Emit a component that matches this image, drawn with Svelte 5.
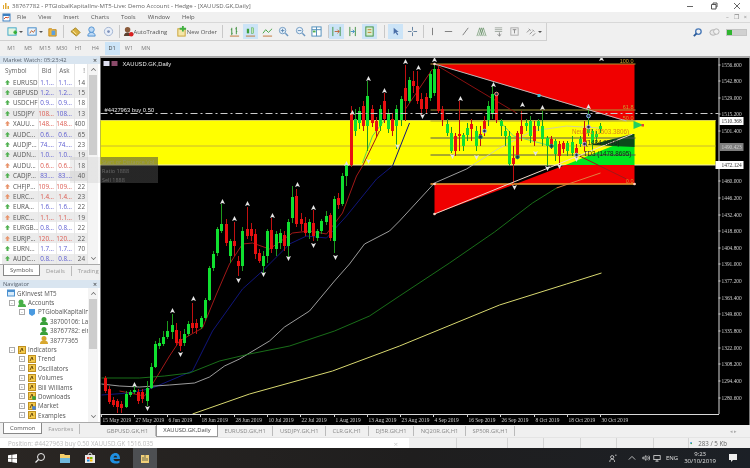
<script>
  const rows = [
    ['EURUSD', '1.1...', '1.1...', 14, 'b'], ['GBPUSD', '1.2...', '1.2...', 15, 'b'],
    ['USDCHF', '0.9...', '0.9...', 18, 'b'], ['USDJPY', '108...', '108...', 13, 'm'],
    ['XAUU...', '148...', '148...', 400, 'r'], ['AUDC...', '0.6...', '0.6...', 65, 'b'],
    ['AUDJP...', '74....', '74....', 23, 'b'], ['AUDN...', '1.0...', '1.0...', 19, 'b'],
    ['AUDU...', '0.6...', '0.6...', 18, 'r'], ['CADJP...', '83....', '83....', 40, 'b'],
    ['CHFJP...', '109...', '109...', 22, 'r'], ['EURC...', '1.4...', '1.4...', 23, 'r'],
    ['EURA...', '1.6...', '1.6...', 22, 'b'], ['EURC...', '1.1...', '1.1...', 19, 'r'],
    ['EURGB...', '0.8...', '0.8...', 22, 'b'], ['EURJP...', '120...', '120...', 22, 'r'],
    ['EURN...', '1.7...', '1.7...', 70, 'b'], ['AUDC...', '0.8...', '0.8...', 24, 'b']
  ];

  const indicators = ['Trend', 'Oscillators', 'Volumes', 'Bill Williams', 'Downloads', 'Market', 'Examples'];
  const timeframes = ['M1', 'M5', 'M15', 'M30', 'H1', 'H4', 'D1', 'W1', 'MN'];
  const tabs = ['GBPUSD.GK,H1', 'XAUUSD.GK,Daily', 'EURUSD.GK,H1', 'USDJPY.GK,H1', 'CLR.GK,H1', 'DJ5R.GK,H1', 'NQ20R.GK,H1', 'SP50R.GK,H1'];
  const menu = ['File', 'View', 'Insert', 'Charts', 'Tools', 'Window', 'Help'];

  // x, green?, body top, body bottom, high, low (screen px)
  const candles = [
    [106,0,377,390,375,392],[110,0,388,401,385,403],[114,0,399,404,396,406],[118,0,400,406,398,412],[122,0,403,407,400,412],
    [127,1,393,406,390,407],[131,1,391,394,389,396],[135,1,389,391,385,393],[139,0,391,400,388,403],[143,0,391,398,388,402],
    [148,1,387,400,380,405],[152,1,366,387,362,388],[156,1,343,366,340,367],[160,1,342,345,337,348],[164,1,336,343,330,345],
    [168,1,330,336,320,338],[173,1,324,331,313,338],[177,0,329,342,322,345],[181,0,338,345,330,350],[185,1,333,342,328,345],
    [189,1,323,333,320,335],[193,0,322,327,302,332],[197,0,322,327,318,333],[202,1,317,326,315,328],[206,1,299,317,297,320],
    [210,1,267,299,265,300],[214,1,253,267,250,270],[218,1,228,252,226,255],[222,1,223,230,203,232],[227,0,223,242,218,245],
    [231,1,240,255,238,262],[235,0,240,245,221,255],[239,0,260,265,255,275],[243,1,230,265,226,270],[248,0,228,235,206,238],
    [252,0,228,235,222,240],[256,0,233,253,228,258],[260,0,252,260,248,262],[264,1,255,265,250,272],[268,1,230,255,228,262],
    [272,0,229,248,217,252],[277,1,233,248,230,255],[281,1,232,242,228,248],[285,0,234,245,230,250],[289,1,221,245,218,256],
    [293,1,196,217,185,222],[297,0,195,223,188,226],[302,0,218,223,212,230],[306,0,222,232,216,235],[310,1,221,232,218,238],
    [314,0,222,235,209,240],[318,1,230,237,228,240],[322,1,220,230,218,233],[327,1,215,221,210,224],[331,0,214,237,212,240],
    [335,1,198,240,195,252],[339,0,197,204,192,208],[343,1,175,203,172,205],[347,1,164,175,162,185],[352,0,112,164,105,166],
    [356,1,118,130,108,135],[360,1,110,122,106,128],[364,0,105,125,100,130],[368,1,95,125,80,150],[373,0,108,122,104,126],
    [377,0,120,130,116,136],[381,1,108,125,104,130],[385,0,100,118,92,122],[389,1,112,128,108,132],[393,0,118,130,112,135],
    [397,1,108,125,104,148],[402,1,98,119,95,125],[406,0,87,100,64,120],[410,1,79,100,76,102],[414,0,80,85,70,92],
    [418,0,85,100,70,103],[422,0,98,108,92,115],[427,0,96,108,92,112],[431,1,73,97,70,100],[435,1,68,92,62,95],
    [439,0,68,110,65,112],[443,0,108,119,105,125],[448,1,123,132,118,135],[452,1,132,150,126,152],[456,0,135,150,132,155],
    [460,0,133,135,100,150],[464,1,134,145,132,150],[468,1,127,134,122,140],[472,0,123,128,118,140],[477,1,130,145,125,150],
    [481,0,133,138,125,145],[485,0,120,132,115,135],[489,1,105,119,100,125],[493,1,93,112,85,118],[497,0,93,119,92,122],
    [502,1,120,125,118,135],[506,1,130,135,125,145],[510,1,135,163,130,165],[514,0,157,163,145,183],[518,0,132,157,130,158],
    [522,0,125,133,110,140],[527,1,122,125,118,130],[531,1,120,135,115,142],[535,0,125,140,120,145],[539,1,120,125,118,130],
    [543,1,125,138,110,145],[548,1,137,145,135,165],[552,0,138,143,135,148],[556,1,140,153,138,160],[560,0,143,155,140,165],
    [564,0,142,148,140,152],[568,1,142,150,140,155],[573,1,141,152,135,155],[577,0,147,152,143,158],[581,1,138,143,135,146],
    [585,0,127,145,120,150],[589,1,125,132,106,135],[593,1,130,142,128,150],[597,1,133,136,130,142],[601,1,125,128,122,132]
  ];

  const upArrows = [[135,384],[173,310],[194,298],[223,201],[235,218],[248,203],[273,215],[298,184],[314,207],[347,163],[353,112],[369,78],[385,90],[406,61],[419,67],[435,59],[461,98],[494,84],[523,104],[543,107],[589,106],[602,58]];
  const downArrows = [[148,407],[181,353],[239,279],[264,273],[289,257],[314,244],[336,256],[369,160],[398,145],[423,115],[453,155],[477,156],[536,152],[515,186],[577,158],[548,167],[560,165]];
  const rings = [[589,115,'#8fb8ff'],[589,126,'#c9a6e8'],[497,93,'#ff9a8a'],[485,130,'#a0b0f0'],[481,136,'#208080'],[518,156,'#208080'],[552,145,'#208080'],[585,143,'#c9a6e8'],[577,154,'#a0c0e0']];

  const pts = (a) => a.map((p) => p.join(',')).join(' ');
  const white = [[102,383],[120,385],[140,386],[170,384],[195,382],[210,376],[225,365],[240,358],[270,340],[285,326],[310,310],[335,280],[350,263],[365,243],[390,230],[400,220],[435,182],[467,168],[500,147],[533,130],[567,125],[600,127]];
  const green = [[102,377],[140,377],[165,375],[190,372],[220,360],[250,353],[290,345],[335,330],[370,315],[400,295],[450,262],[495,231],[533,202],[557,187]];
  const yellow = [[193,413],[250,393],[333,370],[400,345],[500,304],[567,283],[602,272]];
  const red = [[120,390],[145,395],[150,388],[170,355],[180,340],[203,327],[217,293],[230,263],[243,243],[253,242],[270,248],[293,232],[310,230],[327,233],[343,212],[357,175],[363,165],[380,130]];
  const blue = [[102,394],[130,392],[153,387],[193,370],[213,330],[243,288],[263,270],[290,243],[307,235],[327,237],[347,215],[377,178],[393,165],[410,122]];

  const priceLabels = [[64,'1556.600'],[80,'1542.800'],[97,'1529.000'],[113,'1515.200'],[130,'1501.400'],[180,'1460.000'],[197,'1446.200'],[214,'1432.400'],[230,'1418.600'],[247,'1404.800'],[263,'1391.000'],[280,'1377.200'],[297,'1363.400'],[313,'1349.600'],[330,'1335.800'],[347,'1322.000'],[363,'1308.200'],[380,'1294.400'],[397,'1280.600']];
  const dateLabels = [[102,'15 May 2019'],[135,'27 May 2019'],[168,'6 Jun 2019'],[201,'18 Jun 2019'],[235,'28 Jun 2019'],[268,'10 Jul 2019'],[301,'22 Jul 2019'],[335,'1 Aug 2019'],[368,'13 Aug 2019'],[401,'23 Aug 2019'],[434,'4 Sep 2019'],[468,'16 Sep 2019'],[501,'26 Sep 2019'],[535,'8 Oct 2019'],[568,'18 Oct 2019'],[601,'30 Oct 2019']];
  const fibo = [[63,'#b8912a','100.0'],[109,'#a59a35','61.8'],[120,'#b0a030','50.0'],[137,'#555','' ],[154,'#555',''],[183,'#f0a030','0.0']];
</script>

<div class="app">
  <div class="title">
    <svg class="tico" viewBox="0 0 8 8"><path d="M1 7V3h1v4zM3 7V1h1.500v6zM5.500 7V4H7v3z" fill="#e0a830" /></svg>
    <span>38767782 - PTGlobalKapitalInv-MT5-Live: Demo Account - Hedge - [XAUUSD.GK,Daily]</span>
    <div class="winbtns">
      <svg viewBox="0 0 8 8"><path d="M1 4.500h6" stroke="#666" /></svg>
      <svg viewBox="0 0 8 8"><path d="M1.500 2.500h4.500v4.500h-4.500zM3 2.500V1h4v4H6" stroke="#555" fill="none" /></svg>
      <svg viewBox="0 0 8 8"><path d="M1 1l6 6M7 1l-6 6" stroke="#666" fill="none" /></svg>
    </div>
  </div>

  <div class="menu">
    <svg class="mico" viewBox="0 0 9 9"><rect x="1" y="1" width="7" height="7" fill="#fff" stroke="#3d7fc0" /><rect x="1" y="1" width="7" height="2" fill="#3d7fc0" /><path d="M2 6l2-2 1 1 2-1" stroke="#d05030" fill="none" /></svg>
    {#each menu as m}<span class="mitem">{m}</span>{/each}
    <div class="mdi"><span>–</span><span>❐</span><span>×</span></div>
  </div>

  <div class="tools">
    <div class="toolbar">
      <svg class="i" viewBox="0 0 12 12"><rect x="1" y="2" width="9" height="8" fill="#e5f5e0" stroke="#3aa4c8" /><path d="M7 7h4M9 5v4" stroke="#35b035" stroke-width="2" /></svg>
      <span class="caret"></span>
      <svg class="i" viewBox="0 0 12 12"><rect x="1" y="2" width="9" height="8" fill="#eaf4fb" stroke="#3a84c8" /><path d="M3 8l2-3 2 2 2-3" stroke="#c06030" fill="none" /></svg>
      <span class="caret"></span>
      <svg class="i" viewBox="0 0 12 12"><path d="M2 3h3l1 1h4v7H2z" fill="#f2b63c" stroke="#c08a20" /><rect x="5" y="5" width="4" height="5" fill="#5aa0e0" /></svg>
      <span class="sep"></span>
      <svg class="i" viewBox="0 0 12 12"><path d="M1 6l5-4 5 5-4 4z" fill="#d8b040" stroke="#a08020" /><path d="M3 5l4 4" stroke="#fff0b0" /></svg>
      <svg class="i" viewBox="0 0 12 12"><circle cx="6" cy="4" r="3" fill="#bcd8f4" stroke="#4a8ed0" /><path d="M2 11c0-3 2-4 4-4s4 1 4 4z" fill="#bcd8f4" stroke="#4a8ed0" /></svg>
      <svg class="i" viewBox="0 0 12 12"><circle cx="6" cy="6" r="4.500" fill="#e8eef8" stroke="#9db0d0" /><circle cx="6" cy="6" r="1.500" fill="#7c8fb8" /></svg>
      <span class="sep"></span>
      <div class="labelled auto">
        <svg class="i" viewBox="0 0 12 12"><circle cx="5" cy="4" r="3" fill="#8a5a3a" /><path d="M1 11c0-3 2-4 4-4s4 2 4 4z" fill="#5a4030" /><circle cx="9" cy="9" r="2.500" fill="#d82020" /></svg>
        <span>AutoTrading</span>
      </div>
      <div class="labelled order">
        <svg class="i" viewBox="0 0 12 12"><rect x="2" y="3" width="8" height="8" fill="#f5e6a8" stroke="#c8a030" /><path d="M4 3h7M7.500 0v6" stroke="#40b040" stroke-width="2" /></svg>
        <span>New Order</span>
      </div>
      <span class="sep"></span>
      <svg class="i" viewBox="0 0 12 12"><path d="M3 2v8M2 4h1M3 8h1M8 1v8M7 3h1M8 6h1" stroke="#3b8f3b" fill="none" /><path d="M1 11h10" stroke="#c07030" /></svg>
      <svg class="i on" viewBox="0 0 12 12"><rect x="2" y="3" width="2.500" height="5" fill="#3da03d" /><rect x="7" y="2" width="2.500" height="6" fill="#bfe6b8" stroke="#3da03d" stroke-width=".5" /><path d="M1 11h10" stroke="#c07030" /></svg>
      <svg class="i" viewBox="0 0 12 12"><path d="M1 8l3-4 3 3 4-4" stroke="#3da03d" fill="none" /><path d="M1 11h10" stroke="#c07030" /></svg>
      <svg class="i" viewBox="0 0 12 12"><circle cx="5" cy="5" r="3.500" fill="#eaf3fb" stroke="#6a96c0" /><path d="M8 8l3 3" stroke="#6a96c0" stroke-width="1.500" /><path d="M3 5h4M5 3v4" stroke="#5a86b0" /></svg>
      <svg class="i" viewBox="0 0 12 12"><circle cx="5" cy="5" r="3.500" fill="#eaf3fb" stroke="#6a96c0" /><path d="M8 8l3 3" stroke="#6a96c0" stroke-width="1.500" /><path d="M3 5h4" stroke="#5a86b0" /></svg>
      <svg class="i" viewBox="0 0 12 12"><rect x="1" y="1" width="10" height="10" fill="#fff" stroke="#4a8ab8" /><path d="M1 4h10M6 1v10" stroke="#4a8ab8" /><rect x="2" y="5" width="3" height="2" fill="#50b050" /></svg>
      <span class="sep tight"></span>
      <svg class="i on" viewBox="0 0 12 12"><path d="M2 1v10M10 1v10" stroke="#3d8f3d" /><path d="M4 6h5M7 4l2 2-2 2" stroke="#c06030" fill="none" /></svg>
      <svg class="i" viewBox="0 0 12 12"><path d="M2 1v10M8 1v10" stroke="#3d8f3d" /><path d="M3 6h4M5 4l2 2-2 2" stroke="#3d8fc0" fill="none" /></svg>
      <svg class="i on" viewBox="0 0 12 12"><rect x="2" y="1" width="8" height="10" fill="#d8eed0" stroke="#3d8f3d" /><path d="M4 4h4M4 7h4" stroke="#c08030" /></svg>
      <span class="sep shift"></span>
      <svg class="i on" viewBox="0 0 12 12"><path d="M4 2v7l2-2 2 3 1-1-2-2.500h2.500z" fill="#4a6fa8" /></svg>
      <svg class="i" viewBox="0 0 12 12"><path d="M6 1v4M6 7v4M1 6h4M7 6h4" stroke="#5a7a9a" fill="none" /></svg>
      <span class="sep tight"></span>
      <svg class="i" viewBox="0 0 12 12"><path d="M6 2v8" stroke="#777" /></svg>
      <svg class="i" viewBox="0 0 12 12"><path d="M2 6h8" stroke="#777" /></svg>
      <svg class="i" viewBox="0 0 12 12"><path d="M3 10l6-8" stroke="#777" /></svg>
      <svg class="i" viewBox="0 0 12 12"><path d="M1 11l3-9 3 9M3 11l3-9 3 9M5 11l3-9 3 9" stroke="#5d8a5d" stroke-width=".7" fill="none" /></svg>
      <svg class="i" viewBox="0 0 12 12"><path d="M2 2h8M2 4h8M2 6h8" stroke="#a0a8a0" /><path d="M7 7v4M5 9l2 2 2-2" stroke="#888" fill="none" /></svg>
      <svg class="i" viewBox="0 0 12 12"><rect x="2" y="2" width="8" height="8" fill="none" stroke="#aaa" /><path d="M4 4h4M6 4v4" stroke="#888" /></svg>
      <svg class="i" viewBox="0 0 12 12"><path d="M1 7l3-3M4 9l3-3M7 11l3-3M3 3l2 2M7 4l2 2" stroke="#888" fill="none" /></svg>
      <span class="caret"></span>
    </div>
    <div class="tray">
      <svg class="i" viewBox="0 0 12 12"><circle cx="7" cy="5" r="3" fill="none" stroke="#4a7ab8" stroke-width="1.500" /><path d="M5 7l-3 3" stroke="#2a5a98" stroke-width="2" /></svg>
      <svg class="i" viewBox="0 0 12 12"><ellipse cx="4.500" cy="6" rx="3.500" ry="3" fill="#e8e8e8" stroke="#b0b0b0" /><ellipse cx="8" cy="5" rx="3" ry="3" fill="#f0f0f0" stroke="#b0b0b0" /></svg>
      <div class="signal"><span></span></div>
    </div>
  </div>

  <div class="frames">
    {#each timeframes as t}<span class="frame" class:active={t === 'D1'}>{t}</span>{/each}
  </div>

  <div class="main">
    <aside class="side">
      <section class="watch">
        <header class="dock"><span>Market Watch: 05:23:42</span><b>×</b></header>
        <div class="watch-body">
          <div class="grid-wrap">
            <div class="row head"><span class="sym">Symbol</span><span class="num c">Bid</span><span class="num c">Ask</span><span class="num">!</span></div>
            {#each rows as r, i}
              <div class="row" class:alt={i % 2 === 1}>
                <span class="sym">
                  <svg class="updown" viewBox="0 0 6 6"><path d="M3 0l3 3H4.200v3H1.800V3H0z" fill={r[4] === 'r' ? '#e8926a' : '#4fb04f'} /></svg>
                  {r[0]}
                </span>
                <span class="num {r[4] === 'b' ? 'blue' : 'red'}">{r[1]}</span>
                <span class="num {r[4] === 'r' ? 'red' : 'blue'}">{r[2]}</span>
                <span class="num">{r[3]}</span>
              </div>
            {/each}
          </div>
          <div class="scroll"><i class="up"></i><em class="thumb-a"></em><i class="down"></i></div>
        </div>
        <nav class="sidetabs">
          <span class="stab on">Symbols</span><span class="stab">Details</span><span class="stab">Trading</span>
        </nav>
      </section>

      <section class="nav">
        <header class="dock"><span>Navigator</span><b>×</b></header>
        <div class="watch-body nav-body">
          <div class="tree">
            <div class="node l0"><svg class="ni" viewBox="0 0 8 8"><rect x=".5" y="1" width="7" height="6" fill="#d8ebfa" stroke="#4a90d0" /><rect x=".5" y="1" width="7" height="2" fill="#4a90d0" /></svg>GKInvest MT5</div>
            <div class="node l1"><i class="box">-</i><svg class="ni" viewBox="0 0 8 8"><circle cx="3" cy="3" r="2.500" fill="#48b048" /><path d="M0 8c0-3 2-3.500 4-3.500S8 5 8 8z" fill="#48b048" /></svg>Accounts</div>
            <div class="node l2"><i class="box">-</i><svg class="ni" viewBox="0 0 8 8"><path d="M1 1h6v5l-3 2-3-2z" fill="#4a9ae0" /></svg>PTGlobalKapitalInv</div>
            <div class="node l3"><svg class="ni" viewBox="0 0 8 8"><circle cx="4" cy="2.500" r="2.500" fill="#3aa03a" /><path d="M0 8c0-3 2-3.500 4-3.500S8 5 8 8z" fill="#3aa03a" /></svg>38700106: Lako</div>
            <div class="node l3"><svg class="ni" viewBox="0 0 8 8"><circle cx="4" cy="2.500" r="2.500" fill="#3aa03a" /><path d="M0 8c0-3 2-3.500 4-3.500S8 5 8 8z" fill="#3aa03a" /></svg>38767782: einot</div>
            <div class="node l3"><svg class="ni" viewBox="0 0 8 8"><circle cx="4" cy="2.500" r="2.500" fill="#d8a830" /><path d="M0 8c0-3 2-3.500 4-3.500S8 5 8 8z" fill="#d8a830" /></svg>38777365</div>
            <div class="node l1"><i class="box">-</i><svg class="ni" viewBox="0 0 8 8"><rect x=".5" y=".5" width="7" height="7" fill="#f2c94c" stroke="#c09020" /><path d="M2 6l2-4 1 3" stroke="#705010" fill="none" /></svg>Indicators</div>
            {#each indicators as n, i}
              <div class="node l2"><i class="box">+</i><svg class="ni" viewBox="0 0 8 8"><rect x=".5" y=".5" width="7" height="7" fill="#f2c94c" stroke="#c09020" /><path d="M2 6l2-4 1 3" stroke="#705010" fill="none" />{#if i === 4}<circle cx="6" cy="6" r="2" fill="#3aa03a" />{/if}{#if i === 5}<circle cx="6" cy="6" r="2" fill="#4a80d0" />{/if}</svg>{n}</div>
            {/each}
          </div>
          <div class="scroll"><i class="up"></i><em class="thumb-b"></em><i class="down"></i></div>
        </div>
        <nav class="sidetabs low">
          <span class="stab on">Common</span><span class="stab">Favorites</span>
        </nav>
      </section>
    </aside>

    <div class="chart-col">
      <svg class="chart" viewBox="101 57 649 367">
        <rect x="101" y="57" width="649" height="367" fill="#000" />

        <!-- top wedge -->
        <polygon points="435,63 635,63 635,119 622,119" fill="#f00000" />
        <!-- band -->
        <rect x="101" y="119" width="615" height="45" fill="#ffff00" />
        <line x1="101" y1="119.500" x2="716" y2="119.500" stroke="#d8d050" />
        <line x1="101" y1="145" x2="716" y2="145" stroke="#c8b830" />
        <line x1="101" y1="164" x2="716" y2="164" stroke="#f0f0b0" />
        <!-- lower wedge, and the xor part over the band -->
        <polygon points="435,183 435,213 516,183" fill="#f00000" />
        <polygon points="516,183 566,164 635,164 635,183" fill="#f00000" />
        <polygon points="566,164 633,137 635,137 635,164" fill="#00e820" />
        <polygon points="590,144 633,133 635,133 635,146" fill="#0b4a1a" />

        <!-- fibo levels -->
        {#each fibo as f}
          <line x1="431" x2="636" y1={f[0]} y2={f[0]} stroke={f[1]} stroke-width={f[0] === 183 ? 1.4 : 1} />
          {#if f[2]}<text class="fib" x="634" y={f[0] - 1} text-anchor="end" fill="#c8a030">{f[2]}</text>{/if}
        {/each}

        <polyline points={pts(red)} class="ma" stroke="#a01818" />
        <polyline points={pts(blue)} class="ma" stroke="#10157a" />
        <polyline points={pts(white)} class="ma thin" stroke="#c4c4c4" />
        <polyline points={pts(green)} class="ma thin" stroke="#1f8a1f" />
        <polyline points="557,187 601,172" class="ma" stroke="#e08040" />
        <polyline points={pts(yellow)} class="ma" stroke="#d8d870" />

        <polyline points="406,108 433,68" class="ma" stroke="#a01818" />
        <polyline points="435,63 517,112" class="ma" stroke="#8a1010" />
        <polyline points="580,155 627,178" class="ma" stroke="#a01818" />
        <polyline points="363,162 373,135 385,119" class="ma" stroke="#5cd05c" />
        <polyline points="500,120 514,135 552,145" class="ma" stroke="#70d870" />

        {#each candles as c}
          <line x1={c[0]} x2={c[0]} y1={c[4]} y2={c[5]} stroke={c[1] ? '#1d9a1d' : '#c01010'} />
          <rect x={c[0] - 1.500} y={c[2]} width="3" height={c[3] - c[2]} fill={c[1] ? '#10e030' : '#e81010'} />
        {/each}

        <!-- wedge edges -->
        <line x1="435" y1="63" x2="627" y2="120" stroke="#b8b8b8" />
        <line x1="435" y1="213" x2="633" y2="133" stroke="#f0d8c8" />
        <line x1="101" y1="112.500" x2="719" y2="112.500" stroke="#ccc" stroke-dasharray="7 3 2 3" />

        {#each upArrows as a}
          <polygon points="{a[0]},{a[1] - 3} {a[0] + 2.500},{a[1] + 2} {a[0]},{a[1] + 1} {a[0] - 2.500},{a[1] + 2}" fill="#e4e4e4" />
        {/each}
        {#each downArrows as a}
          <polygon points="{a[0]},{a[1] + 3} {a[0] + 2.500},{a[1] - 2} {a[0]},{a[1] - 1} {a[0] - 2.500},{a[1] - 2}" fill="#e4e4e4" />
        {/each}
        {#each rings as r}
          <circle cx={r[0]} cy={r[1]} r="1.800" fill="#203040" stroke={r[2]} />
        {/each}
        <rect x="538" y="93" width="3" height="3" fill="#40c0d0" />
        <circle cx="435" cy="63" r="1.300" fill="#ffd0c0" />
        <circle cx="435" cy="183" r="1.300" fill="#ffd0c0" />
        <circle cx="435" cy="213" r="1.300" fill="#ffd0c0" />
        <circle cx="635" cy="183" r="1.300" fill="#ffd0c0" />

        <polygon points="634,120 634,128 644,124" fill="#20d060" />
        <rect x="642" y="123" width="2.500" height="2.500" fill="#e04040" />

        <text class="fib2" x="601" y="133">Neu D1 (1503.3806)</text>
        <text class="fib2 dark" x="603" y="144">(1484.9846)</text>
        <text class="fib2 dark" x="608" y="155">TD3 (1478.8695)</text>

        <!-- chart header -->
        <rect x="104" y="60" width="6" height="5" fill="#dde" />
        <rect x="112" y="60" width="6" height="5" fill="#8a4a6a" />
        <text class="lbl" x="123" y="64.500">XAUUSD.GK,Daily</text>
        <text class="lbl" x="105" y="111">#4427963 buy 0.50</text>

        <!-- axes -->
        <line x1="719.500" y1="57" x2="719.500" y2="413" stroke="#d8d8d8" />
        <line x1="101" y1="413.500" x2="719.500" y2="413.500" stroke="#d8d8d8" />
        {#each priceLabels as p}
          <line x1="719" x2="721" y1={p[0]} y2={p[0]} stroke="#ccc" />
          <text class="tick" x="722" y={p[0] + 2}>{p[1]}</text>
        {/each}
        {#each dateLabels as d}
          <line x1={d[0]} x2={d[0]} y1="413" y2="416" stroke="#ccc" />
          <text class="tick" x={d[0] + 1} y="421">{d[1]}</text>
        {/each}

        <rect x="720" y="116" width="24" height="8" fill="#fff" />
        <text class="tick dark" x="722" y="122">1510.368</text>
        <rect x="720" y="142" width="24" height="8" fill="#7e7e7e" />
        <text class="tick" x="722" y="148">1490.423</text>
        <rect x="716" y="160" width="28" height="8" fill="#fff" />
        <text class="tick dark" x="722" y="166">1472.124</text>
      </svg>

      <div class="tabs">
        {#each tabs as t}<span class="tab" class:cur={t.startsWith('XAU')}>{t}</span>{/each}
        <span class="pager">◂ ▸</span>
      </div>
    </div>
  </div>

  <div class="status">
    <div class="note"><span>Position: #4427963 buy 0.50 XAUUSD.GK 1516.035</span><b>×</b></div>
    <div class="cells">
      <span class="w47"></span><span class="w51"></span><span class="w36"></span><span class="w37"></span><span class="w36"></span><span class="w35"></span>
      <span class="traffic">
        <svg viewBox="0 0 8 8"><rect x="1" y="0" width="6" height="8" rx="1" fill="#4a9ae0" /><rect x="3" y="4" width="5" height="4" fill="#40b040" /></svg>
        283 / 5 Kb
      </span>
    </div>
  </div>

  <footer class="taskbar">
    <svg class="win" viewBox="0 0 10 10"><path d="M0 1.500l4-.6v3.700H0zM4.700.8L10 0v4.600H4.700zM0 5.300h4V9L0 8.500zM4.700 5.300H10V10l-5.300-.7z" fill="#fff" /></svg>
    <svg class="tb-i" viewBox="0 0 12 12"><circle cx="7" cy="5" r="3.500" fill="none" stroke="#eee" /><path d="M4.500 7.500L1.500 10.500" stroke="#eee" stroke-width="1.300" /></svg>
    <svg class="tb-i" viewBox="0 0 12 12"><path d="M1 2h4l1 1h5v8H1z" fill="#f5cf6a" /><rect x="1" y="6" width="10" height="5" fill="#6fb8dc" /></svg>
    <svg class="tb-i" viewBox="0 0 12 12"><path d="M4 3a2 2 0 014 0" fill="none" stroke="#ddd" /><rect x="1" y="3" width="10" height="8" fill="#e8e8e8" /><rect x="3" y="5" width="2.500" height="2" fill="#e8492f" /><rect x="6" y="5" width="2.500" height="2" fill="#7fba00" /><rect x="3" y="7.500" width="2.500" height="2" fill="#1f8fe0" /><rect x="6" y="7.500" width="2.500" height="2" fill="#ffb900" /></svg>
    <span class="edge"><svg class="tb-i" viewBox="0 0 12 12"><path d="M1 7C1 3 4 1 6.500 1 9.500 1 11 3.500 11 7H4.500c.2 2.200 3.500 3 6 1.500v2.200C7 12.500 1 11.500 1 7zm3.500-1.500h3.700C8.200 3.500 5 3 4.500 5.500z" fill="#1f8fe0" /></svg></span>
    <span class="running"><svg class="tb-i" viewBox="0 0 12 12"><path d="M2 3h8v8H2z" fill="#f2d078" /><path d="M4 9V5M6 9V3M8 9V6" stroke="#6a6a50" /></svg></span>
    <div class="systray">
      <svg class="sys s-person" viewBox="0 0 10 10"><circle cx="4" cy="4" r="2" fill="none" stroke="#ddd" /><path d="M1 10c0-3 1.500-3.500 3-3.500S7 7 7 10M7.500 1.500h2" stroke="#ddd" fill="none" /></svg>
      <svg class="sys s-caret" viewBox="0 0 10 10"><path d="M1 7l4-4 4 4" stroke="#ddd" fill="none" /></svg>
      <svg class="sys s-vol" viewBox="0 0 10 10"><path d="M1 4h2l2-2v6L3 6H1zM7 3c1 1 1 3 0 4M8.500 2c1.500 1.500 1.500 4.500 0 6" fill="none" stroke="#ddd" /></svg>
      <svg class="sys s-net" viewBox="0 0 10 10"><rect x="1" y="2" width="8" height="5" fill="none" stroke="#ddd" /><path d="M3 9h4M5 7v2" stroke="#ddd" /></svg>
      <span class="lang">ENG</span>
      <div class="clock"><span>9:23</span><span>30/10/2019</span></div>
      <svg class="sys notif" viewBox="0 0 10 10"><path d="M1 1h8v6H5L3 9V7H1z" fill="#eee" /></svg>
    </div>
  </footer>

  <!-- leftover tooltip hanging over the dock and the chart -->
  <div class="ghost">
    <span>Start or Distance  Vol</span>
    <span>Ratio  1888</span>
    <span>Sell  1888</span>
  </div>
</div>

<style>
  :global(body) { margin: 0; background: #f0f0f0; }
  .app {
    position: relative;
    width: 750px;
    height: 468px;
    overflow: hidden;
    display: flex;
    flex-direction: column;
    background: #f0f0f0;
    color: #555;
    font: 6.4px "Open Sans", "Liberation Sans", sans-serif;
    filter: blur(.3px);
  }

  .title {
    height: 12px;
    display: flex;
    align-items: center;
    background: #fff;
    color: #666;
    font-size: 6.050px;
    white-space: nowrap;
  }
  .tico { width: 8px; height: 8px; margin: 0 2px 0 2px; }
  .winbtns { margin-left: auto; display: flex; gap: 15.500px; margin-right: 9px; }
  .winbtns svg { width: 8px; height: 8px; }

  .menu {
    height: 10px;
    display: flex;
    align-items: center;
    font-size: 5.900px;
    border-bottom: 1px solid #d8d8d8;
  }
  .mico { width: 9px; height: 9px; margin-left: 2px; margin-right: 6px; }
  .mitem { margin-right: 12px; }
  .mdi { margin-left: auto; margin-right: 3px; display: flex; gap: 5px; color: #888; font-size: 5.500px; }

  .tools { height: 18px; display: flex; align-items: center; justify-content: space-between; }
  .toolbar {
    width: 547px;
    box-sizing: border-box;
    height: 18px;
    padding-left: 6.500px;
    display: flex;
    align-items: center;
    gap: 5.500px;
    border-right: 1px solid #d0d0d0;
    border-bottom: 1px solid #d0d0d0;
  }
  .i { width: 11px; height: 11px; flex: none; }
  .i.on { background: #cce4f7; outline: 2px solid #cce4f7; }
  .caret { width: 0; height: 0; margin-left: -4px; margin-right: -2px; border: 2px solid transparent; border-top: 2.500px solid #555; border-bottom: 0; flex: none; }
  .sep { width: 1px; height: 13px; background: #c8c8c8; flex: none; }
  .sep.tight { margin-right: -3px; }
  .sep.shift { margin-left: 3px; }
  .labelled { display: flex; align-items: center; gap: 0; font-size: 5.900px; color: #555; white-space: nowrap; }
  .auto { margin-left: -3px; }
  .order { margin-left: 3px; }
  .tray { display: flex; align-items: center; gap: 6px; margin-right: 3px; }
  .signal { width: 21px; height: 7px; background: #d0d0d0; border: 1px solid #c4c4c4; box-sizing: border-box; }
  .signal span { display: block; width: 5px; height: 100%; background: #2fb52f; }

  .frames { height: 15px; display: flex; align-items: center; padding-left: 3px; color: #7a7a7a; font-size: 5.500px; box-sizing: border-box; }
  .frame { width: 16.800px; height: 13px; line-height: 13px; text-align: center; }
  .frame.active { background: #cce4f7; color: #444; width: 15px; margin: 0 .9px; }

  .main { height: 381px; display: flex; }

  .side { width: 100px; flex: none; display: flex; flex-direction: column; background: #f0f0f0; }
  .dock {
    height: 8px;
    flex: none;
    display: flex;
    align-items: center;
    justify-content: space-between;
    padding: 0 3px;
    background: #d9e5f0;
    color: #5a6470;
    font-size: 5.800px;
  }
  .dock b { color: #333; font-weight: 400; font-size: 7px; }
  .watch { height: 220px; display: flex; flex-direction: column; }
  .watch-body { flex: 1; display: flex; min-height: 0; padding-left: 2px; background: #fff; }
  .grid-wrap { width: 86px; }
  .row { height: 10.400px; display: grid; grid-template-columns: 37px 18px 18px 13px; align-items: center; font-size: 6.300px; }
  .row.head { height: 13px; color: #666; border-bottom: 0; }
  .alt { background: #ebebeb; }
  .row > span { border-right: 1px solid #e6e6e6; height: 100%; display: flex; align-items: center; overflow: hidden; white-space: nowrap; }
  .sym { padding-left: 3px; gap: 2px; }
  .head .sym { padding-left: 3px; }
  .updown { width: 5px; height: 5px; flex: none; margin-right: 1px; }
  .num { justify-content: flex-end; padding-right: 2px; box-sizing: border-box; }
  .c { justify-content: center; }
  .blue { color: #5a5ad0; }
  .red { color: #dc5a50; }
  .scroll { width: 10px; position: relative; background: #f4f4f4; display: flex; flex-direction: column; align-items: center; }
  .scroll em { display: block; width: 8px; background: #cdcdcd; margin-top: 2px; }
  .thumb-a { height: 80px; }
  .thumb-b { height: 50px; }
  .up, .down { width: 4px; height: 4px; border-left: 1px solid #666; border-top: 1px solid #666; transform: rotate(45deg) scale(.7); margin-top: 4px; }
  .down { transform: rotate(225deg) scale(.7); margin-top: auto; margin-bottom: 4px; }
  .sidetabs { height: 12px; flex: none; display: flex; align-items: flex-start; background: #f0f0f0; padding-left: 3px; font-size: 5.900px; color: #999; border-top: 1px solid #aaa; box-sizing: border-box; overflow: hidden; }
  .sidetabs.low { height: 15px; }
  .stab { padding: 0 6px; line-height: 10px; border-right: 1px solid #bbb; margin-top: 1px; white-space: nowrap; }
  .stab.on { background: #fff; color: #555; border: 1px solid #888; border-top: 0; margin-top: 0; line-height: 10px; padding: 0 6px; }

  .nav { flex: 1; display: flex; flex-direction: column; min-height: 0; margin-top: 4px; }
  .nav-body { overflow: hidden; }
  .tree { width: 86px; padding-top: .500px; overflow: hidden; }
  .node { height: 9.400px; display: flex; align-items: center; font-size: 6.200px; white-space: nowrap; }
  .ni { width: 8px; height: 8px; flex: none; margin-right: 2px; }
  .box { width: 4px; height: 4px; border: 1px solid #aaa; color: #777; font: 4px/4px "Liberation Sans", sans-serif; text-align: center; margin-right: 3px; flex: none; }
  .l0 { padding-left: 5px; }
  .l1 { padding-left: 7px; }
  .l2 { padding-left: 17px; }
  .l3 { padding-left: 38px; }

  .chart-col { flex: 1; display: flex; flex-direction: column; min-width: 0; border-top: 2px solid #a8a8a8; border-left: 0; box-sizing: border-box; }
  .chart { display: block; width: 650px; height: 367px; flex: none; }
  .ma { fill: none; stroke-width: 1; }
  .ma.thin { stroke-width: .8; }
  .lbl { fill: #e8e8e8; font: 5.800px "Liberation Sans", sans-serif; }
  .tick { fill: #d0d0d0; font: 5.400px "Liberation Serif", serif; }
  .tick.dark { fill: #333; }
  .fib { font: 5.500px "Liberation Sans", sans-serif; }
  .fib2 { fill: #d8801a; font: 6.300px "Liberation Sans", sans-serif; text-anchor: middle; }
  .fib2.dark { fill: #1a1a1a; }

  .tabs { height: 12px; display: flex; align-items: center; color: #888; font-size: 5.850px; background: #f0f0f0; }
  .tab { padding: 0 6.500px; line-height: 10px; border-right: 1px solid #bbb; white-space: nowrap; }
  .tab.cur { background: #fff; color: #444; border: 1px solid #999; border-top: 0; line-height: 11px; }
  .pager { margin-left: auto; margin-right: 13px; color: #aaa; font-size: 5px; }

  .status { height: 11px; display: flex; background: #f0f0f0; font-size: 6.200px; border-top: 1px solid #e4e4e4; box-sizing: border-box; }
  .note { width: 409px; background: #fff; color: #bdbdbd; display: flex; align-items: center; justify-content: space-between; padding: 0 11px 0 8px; box-sizing: border-box; }
  .note b { font-weight: 400; font-size: 8px; color: #ccc; }
  .cells { flex: 1; display: flex; margin-left: 47px; color: #666; }
  .cells span { border-left: 1px solid #d4d4d4; box-sizing: border-box; }
  .w47 { width: 51px; }
  .w51 { width: 36px; }
  .w36 { width: 37px; }
  .w37 { width: 36px; }
  .w35 { width: 35px; }
  .cells .w35 + span { width: 39px; }
  .traffic { display: flex; align-items: center; gap: 6px; padding-left: 1px; white-space: nowrap; }
  .traffic svg { width: 8px; height: 8px; }

  .taskbar { flex: 1; display: flex; align-items: center; background: linear-gradient(90deg, #2a2623, #1f1e1e 55%, #1c2026); color: #e0e0e0; }
  .win { width: 9px; height: 9px; margin-left: 8px; margin-right: 17px; }
  .tb-i { width: 12px; height: 12px; margin-right: 13px; flex: none; }
  .edge, .running { height: 100%; display: flex; align-items: center; }
  .running { background: #4d4f52; width: 24px; justify-content: center; margin-left: -1px; }
  .running .tb-i { margin: 0; }
  .systray { margin-left: auto; display: flex; align-items: center; height: 100%; font-size: 6px; }
  .sys { width: 8px; height: 8px; flex: none; }
  .s-person { margin-right: 11px; }
  .s-caret { margin-right: 6px; }
  .s-vol { margin-right: 3px; }
  .s-net { margin-right: 5px; }
  .sys.notif { margin: 0 12px 0 12px; width: 10px; height: 10px; }
  .lang { margin: 0 6px 0 0; }
  .clock { display: flex; flex-direction: column; align-items: center; line-height: 7.500px; }

  .ghost {
    position: absolute;
    left: 70px;
    top: 157px;
    width: 88px;
    height: 26px;
    background: linear-gradient(90deg, rgba(120, 120, 120, .12) 31px, rgba(70, 70, 70, .55) 31px);
    color: rgba(150, 150, 150, .6);
    display: flex;
    flex-direction: column;
    gap: 1px;
    padding: 1px 0 0 32px;
    box-sizing: border-box;
    font-size: 5.500px;
    white-space: nowrap;
    overflow: hidden;
  }
</style>
